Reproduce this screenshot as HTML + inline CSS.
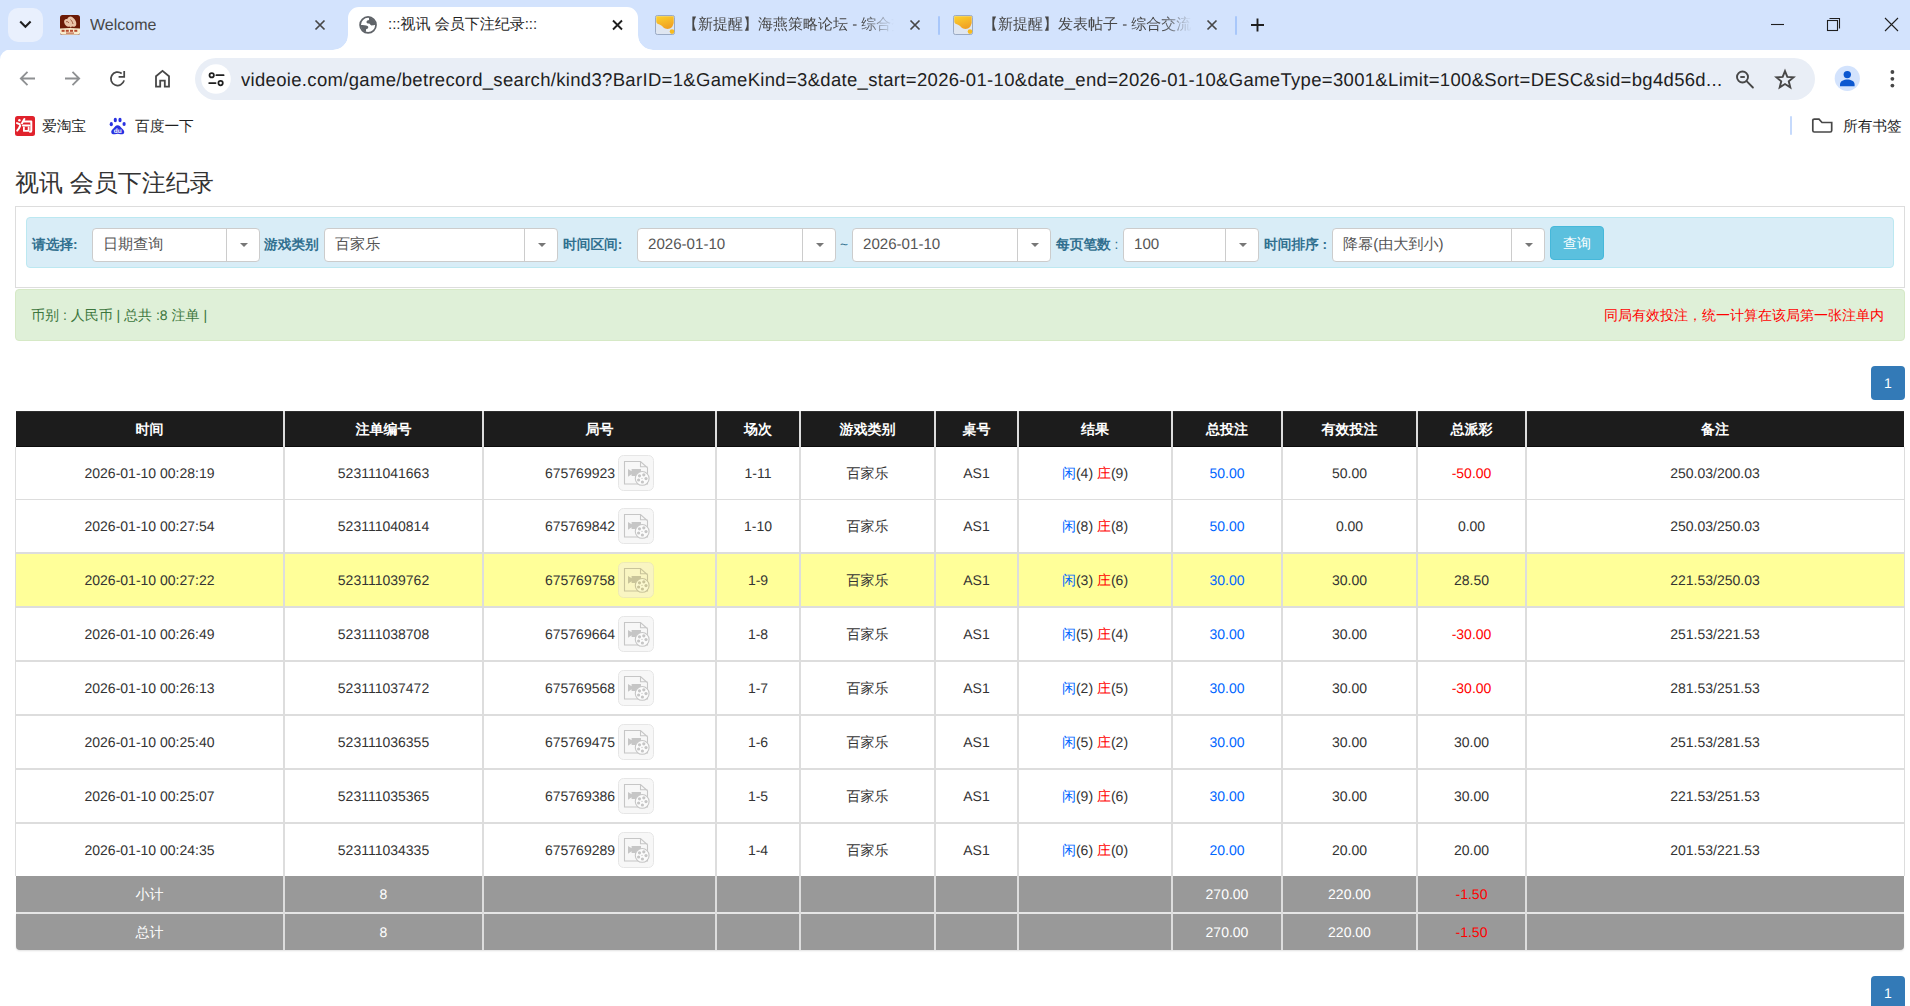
<!DOCTYPE html>
<html><head><meta charset="utf-8"><title>:::视讯 会员下注纪录:::</title>
<style>
*{box-sizing:border-box;margin:0;padding:0}
html,body{text-rendering:geometricPrecision;width:1910px;height:1006px;overflow:hidden;background:#fff;font-family:"Liberation Sans",sans-serif;color:#333}
#pg div,#ch div,#pg span{position:absolute}
#pg span.bl,#pg span.rd,#pg span.jn,#pg span.cj{position:static}
.cj{display:inline-block;white-space:nowrap;text-indent:0;text-align:justify;text-align-last:justify}
.th{background:#1c1c1c;border-top:1px solid #2e2e2e;border-bottom:1px solid #0c0c0c}
.tht{height:36px;line-height:36px;text-align:center;color:#fff;font-weight:bold;font-size:14px}
.td,.tdw{height:20px;line-height:20px;text-align:center;font-size:14px;color:#333;white-space:nowrap}
.tdw{color:#fff}
.bl{color:#0066ff}
.rd{color:#ff0000}
.hl{background:#dddddd}
.hlw{background:#e6e6e6}
.vl{background:#dddddd}
.gr{background:#999999}
#pg .jc{display:flex;align-items:center;justify-content:center;height:36px}
#pg .vid{position:static;display:block;width:36px;height:36px;margin-left:3px}
.lbl{font-size:13.7px;font-weight:bold;color:#31708f;line-height:20px;height:20px;white-space:nowrap}
.sel{height:34px;background:#fff;border:1px solid #ccc;border-radius:4px}
.sel .st{left:10px;top:6px;font-size:15.1px;line-height:20px;color:#555;white-space:nowrap}
.sel .dv{top:0;width:1px;height:32px;background:#ccc}
.sel .ar{top:14px;width:0;height:0;border-left:4px solid transparent;border-right:4px solid transparent;border-top:4px solid #777}
.ctab{height:20px;line-height:20px;font-size:15px;white-space:nowrap;overflow:hidden}
.fade{-webkit-mask-image:linear-gradient(to right,#000 calc(100% - 30px),transparent 100%)}
.url{height:25px;line-height:26px;font-size:18.5px;letter-spacing:0.32px;color:#1f1f1f;white-space:nowrap;overflow:hidden}
.bmt{height:20px;line-height:20px;font-size:14.7px;color:#1f1f1f;white-space:nowrap}
</style></head>
<body>
<div id="ch">
<div style="left:0;top:0;width:1910px;height:50px;background:#d3e3fd"></div>
<div style="left:8px;top:8px;width:35px;height:34px;border-radius:10px;background:#e9f0fd"></div>
<svg style="position:absolute;left:0;top:0" width="1910" height="143" viewBox="0 0 1910 143">
 <!-- dropdown chevron -->
 <path d="M20.2 21.6 L25.4 26.8 L30.6 21.6" fill="none" stroke="#1f1f1f" stroke-width="2.1"/>
 <!-- active tab -->
 <path d="M333 50 A15 15 0 0 0 348 35 L348 18 A11 11 0 0 1 359 7 L627 7 A11 11 0 0 1 638 18 L638 35 A15 15 0 0 0 653 50 Z" fill="#fff"/>
 <!-- welcome favicon -->
 <rect x="60" y="15" width="20" height="20" rx="2.5" fill="#6b1a06"/>
 <path d="M60 28.6 Q70 27.6 80 28.6 L80 32.2 A2.5 2.5 0 0 1 77.5 34.7 L62.5 34.7 A2.5 2.5 0 0 1 60 32.2 Z" fill="#f8eccd"/>
 <path d="M64.2 22.5 C63.6 20 65.5 18.6 67.2 19.2 C68 17 70.5 15.6 72.5 17.3 C75.5 19.5 76.8 22.5 76.2 25 C75.5 27 73.5 27.2 72 26.2 L70.8 27.8 L69.8 26.5 C67.5 27.2 64.8 25.8 64.2 22.5 Z" fill="#e9c3a8"/>
 <path d="M66 22 C67 21 68.2 21.8 68.8 23 M70.5 19.5 C71.5 20.5 72.5 22 73 24" fill="none" stroke="#8a3a20" stroke-width="0.8"/>
 <g fill="#b5492d"><rect x="61.6" y="29.8" width="3" height="2"/><rect x="65.8" y="29.8" width="3" height="2"/><rect x="70" y="29.8" width="3" height="2"/><rect x="74.3" y="29.8" width="3" height="2"/><rect x="66" y="32.6" width="8" height="1"/></g>
 <!-- close X tab1 -->
 <path d="M315.5 20.5 L324.5 29.5 M324.5 20.5 L315.5 29.5" stroke="#474747" stroke-width="1.7"/>
 <!-- globe -->
 <g transform="translate(356,13)">
 <circle cx="12.05" cy="11.93" r="7.95" fill="none" stroke="#5f6368" stroke-width="1.75"/>
 <path d="M12.9 4.4 L13.1 6.9 C12 7 10.4 7.6 10.5 9 C10.5 10.3 11.5 10.5 13 10.6 C14 10.8 14.3 12.3 15.6 12.4 C17 12.5 18.2 11.8 19.4 11.7 A7.4 7.4 0 0 0 12.9 4.4 Z" fill="#5f6368"/>
 <path d="M4.7 12.1 C7 12.3 10 12.2 11.5 12.9 C12.6 13.5 12.5 15.2 11.3 15.7 C10.2 16 9.9 16.5 10 17.2 L10 19.1 A7.4 7.4 0 0 1 4.7 12.1 Z" fill="#5f6368"/>
 </g>
 <!-- close X tab2 -->
 <path d="M613 20.5 L622 29.5 M622 20.5 L613 29.5" stroke="#1f1f1f" stroke-width="1.9"/>
 <!-- tab3 favicon -->
 <defs><linearGradient id="yg" x1="0" y1="0" x2="0.4" y2="1"><stop offset="0" stop-color="#fdd22c"/><stop offset="1" stop-color="#f0a224"/></linearGradient></defs>
 <g id="fav3">
 <rect x="655.5" y="15.5" width="19" height="19" rx="1.8" fill="#dfe6f1" stroke="#9aaac4" stroke-width="1"/>
 <path d="M656.3 16.3 H673.7 V23 C673 25 672.5 27.5 670 28.5 C668 29.3 665 29.2 663.2 27.3 C661.5 25.5 661 25.2 659.5 24.6 C657.5 24 656.3 23 656.3 21.5 Z" fill="url(#yg)"/>
 <circle cx="672" cy="31.6" r="2.3" fill="#f8bb1e"/>
 </g>
 <path d="M910.5 20.5 L919.5 29.5 M919.5 20.5 L910.5 29.5" stroke="#474747" stroke-width="1.7"/>
 <rect x="938" y="16" width="2" height="19" rx="1" fill="#a8c7fa"/>
 <!-- tab4 favicon -->
 <use href="#fav3" transform="translate(298,0)"/>
 <path d="M1207.5 20.5 L1216.5 29.5 M1216.5 20.5 L1207.5 29.5" stroke="#474747" stroke-width="1.7"/>
 <rect x="1235" y="16" width="2" height="19" rx="1" fill="#a8c7fa"/>
 <!-- plus -->
 <path d="M1257.5 18.5 L1257.5 31.5 M1251 25 L1264 25" stroke="#1f1f1f" stroke-width="1.9"/>
 <!-- window controls -->
 <path d="M1771 24.5 L1784 24.5" stroke="#1f1f1f" stroke-width="1.1"/>
 <rect x="1827.5" y="20.5" width="10" height="10" fill="none" stroke="#1f1f1f" stroke-width="1.1"/>
 <path d="M1829.5 18.5 L1839.5 18.5 L1839.5 28.5" fill="none" stroke="#1f1f1f" stroke-width="1.1"/>
 <path d="M1885 18 L1898 31 M1898 18 L1885 31" stroke="#1f1f1f" stroke-width="1.1"/>
 <!-- toolbar -->
 <rect x="0" y="50" width="1910" height="93" fill="#fff"/>
 <path d="M333 50 A15 15 0 0 0 348 35 L348 50 Z M653 50 A15 15 0 0 1 638 35 L638 50 Z" fill="#fff"/>
 <path d="M0 49.5 L10 49.5 A10 10 0 0 0 0 59.5 Z" fill="#d3e3fd"/>
 <!-- back -->
 <path d="M35 78.5 L20.8 78.5 M27.5 71.8 L20.8 78.5 L27.5 85.2" fill="none" stroke="#8e9092" stroke-width="1.8"/>
 <path d="M65 78.5 L79.2 78.5 M72.5 71.8 L79.2 78.5 L72.5 85.2" fill="none" stroke="#8e9092" stroke-width="1.8"/>
 <!-- reload -->
 <path d="M124.1 80.4 A6.7 6.7 0 1 1 121.7 73.5" fill="none" stroke="#474747" stroke-width="1.75"/>
 <path d="M124.2 70.9 L124.2 76.9 L118.6 76.9" fill="none" stroke="#474747" stroke-width="1.75"/>
 <!-- home -->
 <path d="M156 86.6 L156 76.2 L162.5 70.9 L169 76.2 L169 86.6 L164.8 86.6 L164.8 80.6 L160.2 80.6 L160.2 86.6 Z" fill="none" stroke="#474747" stroke-width="1.8" stroke-linejoin="miter"/>
 <!-- omnibox -->
 <rect x="195" y="58" width="1620" height="42" rx="21" fill="#e9eef6"/>
 <circle cx="216" cy="79" r="14.8" fill="#fff"/>
 <circle cx="211.7" cy="75.2" r="2.2" fill="none" stroke="#1f1f1f" stroke-width="1.75"/>
 <path d="M216.4 75.2 L223.6 75.2" stroke="#1f1f1f" stroke-width="1.8" stroke-linecap="round"/>
 <circle cx="220.6" cy="83.1" r="2.2" fill="none" stroke="#1f1f1f" stroke-width="1.75"/>
 <path d="M209.2 83.1 L215.6 83.1" stroke="#1f1f1f" stroke-width="1.8" stroke-linecap="round"/>
 <!-- zoom -->
 <circle cx="1742.5" cy="77" r="5.5" fill="none" stroke="#474747" stroke-width="1.9"/>
 <path d="M1740.3 77 L1744.8 77" stroke="#474747" stroke-width="1.9"/>
 <path d="M1746.6 81.2 L1752.9 87.5" stroke="#474747" stroke-width="1.9" stroke-linecap="round"/>
 <!-- star -->
 <path d="M1785.00 71.10 L1787.32 76.90 L1793.56 77.32 L1788.76 81.32 L1790.29 87.38 L1785.00 84.05 L1779.71 87.38 L1781.24 81.32 L1776.44 77.32 L1782.68 76.90 Z" fill="none" stroke="#474747" stroke-width="1.9" stroke-linejoin="miter" stroke-miterlimit="10"/>
 <!-- profile -->
 <circle cx="1847.3" cy="78.4" r="12.6" fill="#d3e3fd"/>
 <circle cx="1847.3" cy="74.6" r="3.7" fill="#0b57d0"/>
 <path d="M1840 86.2 L1840 84.5 C1840 81 1844 79.6 1847.3 79.6 C1850.6 79.6 1854.6 81 1854.6 84.5 L1854.6 86.2 Z" fill="#0b57d0"/>
 <!-- menu -->
 <circle cx="1892.4" cy="72" r="1.9" fill="#474747"/>
 <circle cx="1892.4" cy="78.8" r="1.9" fill="#474747"/>
 <circle cx="1892.4" cy="85.6" r="1.9" fill="#474747"/>
 <!-- bookmarks -->
 <rect x="15" y="116" width="20" height="20" rx="2.5" fill="#e0222c"/>
 <g fill="none" stroke="#fff" stroke-width="2" stroke-linecap="round" stroke-linejoin="round">
  <path d="M17 123.1 L19.8 124.2 M17.2 130.6 Q19.3 128.4 20.2 125.6 M24.4 119 L22 123.3 M23.6 121.4 L31.3 121.4 L31.3 130.8 Q31.2 131.8 30 131.8 M23 125.4 L29.2 125.4"/>
  <path d="M23.9 127.4 L23.9 130.9 L28.6 130.9 L28.6 127.4" stroke-width="1.8"/>
 </g>
 <circle cx="19.4" cy="120.3" r="1.2" fill="#fff"/>
 <path d="M25.3 127.9 C25.3 127.2 26.2 127.1 26.3 127.8 C26.4 127.1 27.3 127.2 27.3 127.9 C27.3 128.6 26.3 129.4 26.3 129.4 C26.3 129.4 25.3 128.6 25.3 127.9 Z" fill="#e0222c"/>
 <g fill="#2932e1">
 <ellipse cx="111.3" cy="124.2" rx="1.6" ry="2.1"/><ellipse cx="115.3" cy="120" rx="1.6" ry="2.2"/><ellipse cx="120" cy="120" rx="1.6" ry="2.2"/><ellipse cx="124.1" cy="124" rx="1.6" ry="2.1"/>
 <path d="M117.6 125.2 C115.5 125.2 114.8 126.8 113.6 128.2 C112.2 129.6 110.9 130.6 111.3 132.4 C111.7 134.2 113.5 134.5 114.8 134.2 C116 134 116.8 133.7 117.7 133.7 C118.7 133.7 119.4 134 120.6 134.2 C122 134.5 123.8 134.2 124.2 132.4 C124.5 130.6 123.2 129.6 121.8 128.2 C120.5 126.8 119.8 125.2 117.6 125.2 Z"/>
 </g>
 <text x="117.7" y="133" font-family="Liberation Sans" font-size="6.5" font-weight="bold" fill="#fff" text-anchor="middle">du</text>
 <path d="M1812.8 119.5 L1812.8 130.5 A1.5 1.5 0 0 0 1814.3 132 L1830.2 132 A1.5 1.5 0 0 0 1831.7 130.5 L1831.7 122.5 L1822 122.5 L1819 119.2 L1814.3 119.2 A1.5 1.5 0 0 0 1812.8 120.7" fill="none" stroke="#474747" stroke-width="1.7"/>
 <rect x="1790" y="116" width="2" height="19" rx="1" fill="#c6dafc"/>
</svg>
<div class="ctab" style="left:90px;top:16px;color:#474747;font-size:16px">Welcome</div>
<div class="ctab" style="left:388px;top:15px;color:#1f1f1f">:::<span class="cj" style="width:30px">视讯</span> <span class="cj" style="width:90px">会员下注纪录</span>:::</div>
<div class="ctab fade" style="left:683px;top:15px;width:211px;color:#474747"><span class="cj" style="width:165px">【新提醒】海燕策略论坛</span> - <span class="cj" style="width:60px">综合交流</span></div>
<div class="ctab fade" style="left:983px;top:15px;width:209px;color:#474747"><span class="cj" style="width:135px">【新提醒】发表帖子</span> - <span class="cj" style="width:60px">综合交流</span></div>
<div class="url" style="left:241px;top:67px;width:1485px">videoie.com/game/betrecord_search/kind3?BarID=1&amp;GameKind=3&amp;date_start=2026-01-10&amp;date_end=2026-01-10&amp;GameType=3001&amp;Limit=100&amp;Sort=DESC&amp;sid=bg4d56d...</div>
<div class="bmt" style="left:42px;top:117px"><span class="cj" style="width:44.06px">爱淘宝</span></div>
<div class="bmt" style="left:135px;top:117px"><span class="cj" style="width:58.75px">百度一下</span></div>
<div class="bmt" style="left:1843px;top:117px"><span class="cj" style="width:58.75px">所有书签</span></div>
</div>

<div id="pg">
<div style="left:15px;top:170px;font-size:24px;line-height:28px;color:#333;white-space:nowrap"><span class="cj" style="width:48px">视讯</span> <span class="cj" style="width:144px">会员下注纪录</span></div>
<div style="left:15px;top:206px;width:1890px;height:82px;border:1px solid #ddd;background:#fff"></div>
<div style="left:26px;top:217px;width:1868px;height:51px;border:1px solid #bce8f1;border-radius:4px;background:#d9edf7"></div>
<div class="lbl" style="left:32px;top:235px"><span class="cj" style="width:41.06px">请选择</span>:</div>
<div class="sel" style="left:92px;top:228px;width:168px"><div class="st"><span class="cj" style="width:60.38px">日期查询</span></div><div class="dv" style="left:133px"></div><div class="ar" style="left:147px"></div></div>
<div class="lbl" style="left:264px;top:235px"><span class="cj" style="width:54.75px">游戏类别</span></div>
<div class="sel" style="left:324px;top:228px;width:234px"><div class="st"><span class="cj" style="width:45.28px">百家乐</span></div><div class="dv" style="left:199px"></div><div class="ar" style="left:213px"></div></div>
<div class="lbl" style="left:563px;top:235px"><span class="cj" style="width:54.75px">时间区间</span>:</div>
<div class="sel" style="left:637px;top:228px;width:199px"><div class="st">2026-01-10</div><div class="dv" style="left:164px"></div><div class="ar" style="left:178px"></div></div>
<div class="lbl" style="left:840px;top:235px;font-weight:normal">~</div>
<div class="sel" style="left:852px;top:228px;width:199px"><div class="st">2026-01-10</div><div class="dv" style="left:164px"></div><div class="ar" style="left:178px"></div></div>
<div class="lbl" style="left:1056px;top:235px"><span class="cj" style="width:54.75px">每页笔数</span><span style="position:static;font-weight:normal"> :</span></div>
<div class="sel" style="left:1123px;top:228px;width:136px"><div class="st">100</div><div class="dv" style="left:101px"></div><div class="ar" style="left:115px"></div></div>
<div class="lbl" style="left:1264px;top:235px"><span class="cj" style="width:54.75px">时间排序</span> :</div>
<div class="sel" style="left:1332px;top:228px;width:213px"><div class="st"><span class="cj" style="width:30.19px">降幂</span>(<span class="cj" style="width:60.38px">由大到小</span>)</div><div class="dv" style="left:178px"></div><div class="ar" style="left:192px"></div></div>
<div style="left:1550px;top:226px;width:54px;height:34px;background:#5bc0de;border:1px solid #46b8da;border-radius:4px;color:#fff;font-size:14px;line-height:33px;text-align:center"><span class="cj" style="width:28px">查询</span></div>
<div style="left:15px;top:289px;width:1890px;height:52px;border:1px solid #d6e9c6;border-radius:4px;background:#dff0d8"></div>
<div style="left:31px;top:305px;font-size:14px;line-height:20px;color:#3c763d;white-space:nowrap"><span class="cj" style="width:28px">币别</span> : <span class="cj" style="width:42px">人民币</span> | <span class="cj" style="width:28px">总共</span> :8 <span class="cj" style="width:28px">注单</span> |</div>
<div style="left:1604px;top:305px;font-size:14px;line-height:20px;color:#ff0000;white-space:nowrap"><span class="cj" style="width:280px">同局有效投注，统一计算在该局第一张注单内</span></div>
<div style="left:1871px;top:366px;width:34px;height:34px;background:#337ab7;border-radius:4px;color:#fff;font-size:14px;line-height:34px;text-align:center">1</div>
<div style="left:1871px;top:976px;width:34px;height:34px;background:#337ab7;border-radius:4px;color:#fff;font-size:14px;line-height:34px;text-align:center">1</div>
<div id="tbl">
<div class="th" style="left:16px;top:411px;width:1888px;height:36px"></div>
<div class="tht" style="left:15px;top:411px;width:269px"><span class="cj" style="width:28px">时间</span></div>
<div class="tht" style="left:284px;top:411px;width:199px"><span class="cj" style="width:56px">注单编号</span></div>
<div class="tht" style="left:483px;top:411px;width:233px"><span class="cj" style="width:28px">局号</span></div>
<div class="tht" style="left:716px;top:411px;width:84px"><span class="cj" style="width:28px">场次</span></div>
<div class="tht" style="left:800px;top:411px;width:135px"><span class="cj" style="width:56px">游戏类别</span></div>
<div class="tht" style="left:935px;top:411px;width:83px"><span class="cj" style="width:28px">桌号</span></div>
<div class="tht" style="left:1018px;top:411px;width:154px"><span class="cj" style="width:28px">结果</span></div>
<div class="tht" style="left:1172px;top:411px;width:110px"><span class="cj" style="width:42px">总投注</span></div>
<div class="tht" style="left:1282px;top:411px;width:135px"><span class="cj" style="width:56px">有效投注</span></div>
<div class="tht" style="left:1417px;top:411px;width:109px"><span class="cj" style="width:42px">总派彩</span></div>
<div class="tht" style="left:1526px;top:411px;width:378px"><span class="cj" style="width:28px">备注</span></div>
<div class="tr" style="left:15px;top:447px;width:1890px;height:53px;background:#fff"></div>
<div class="td" style="left:15px;top:463px;width:269px">2026-01-10 00:28:19</div>
<div class="td" style="left:284px;top:463px;width:199px">523111041663</div>
<div class="td jc" style="left:483px;top:455px;width:233px"><span class="jn">675769923</span><svg class="vid" width="36" height="36" viewBox="0 0 36 36"><rect x="0.5" y="0.5" width="35" height="35" rx="5" fill="#f7f7f7" stroke="#e6e6e6"/>
<path d="M6.5 6.5 L22.5 6.5 L29.5 12.8 L29.5 29 L6.5 29 Z M22.5 6.5 L22.5 11.8 L29.5 11.8" fill="none" stroke="#c6c6c6" stroke-width="1.1"/>
<path d="M10 13.9 L13.6 16.2 L13.6 14 L23 14 L23 21 L13.6 21 L13.6 19.3 L10 21.8 Z" fill="#c6c6c6"/>
<circle cx="24.2" cy="23.4" r="6.9" fill="#fbfbfb" stroke="#c6c6c6" stroke-width="1.1"/>
<circle cx="21.5" cy="20.8" r="1.6" fill="#c6c6c6"/><circle cx="25.8" cy="19.8" r="1.6" fill="#c6c6c6"/><circle cx="28" cy="23.6" r="1.6" fill="#c6c6c6"/><circle cx="24.4" cy="27" r="1.6" fill="#c6c6c6"/><circle cx="20.6" cy="25" r="1.6" fill="#c6c6c6"/><circle cx="24" cy="23.4" r="0.6" fill="#c6c6c6"/>
</svg></div>
<div class="td" style="left:716px;top:463px;width:84px">1-11</div>
<div class="td" style="left:800px;top:463px;width:135px"><span class="cj" style="width:42px">百家乐</span></div>
<div class="td" style="left:935px;top:463px;width:83px">AS1</div>
<div class="td" style="left:1018px;top:463px;width:154px"><span class="bl"><span class="cj" style="width:14px">闲</span></span>(4) <span class="rd"><span class="cj" style="width:14px">庄</span></span>(9)</div>
<div class="td" style="left:1172px;top:463px;width:110px"><span class="bl">50.00</span></div>
<div class="td" style="left:1282px;top:463px;width:135px">50.00</div>
<div class="td" style="left:1417px;top:463px;width:109px"><span class="rd">-50.00</span></div>
<div class="td" style="left:1526px;top:463px;width:378px">250.03/200.03</div>
<div class="tr" style="left:15px;top:500px;width:1890px;height:53px;background:#fff"></div>
<div class="td" style="left:15px;top:516px;width:269px">2026-01-10 00:27:54</div>
<div class="td" style="left:284px;top:516px;width:199px">523111040814</div>
<div class="td jc" style="left:483px;top:508px;width:233px"><span class="jn">675769842</span><svg class="vid" width="36" height="36" viewBox="0 0 36 36"><rect x="0.5" y="0.5" width="35" height="35" rx="5" fill="#f7f7f7" stroke="#e6e6e6"/>
<path d="M6.5 6.5 L22.5 6.5 L29.5 12.8 L29.5 29 L6.5 29 Z M22.5 6.5 L22.5 11.8 L29.5 11.8" fill="none" stroke="#c6c6c6" stroke-width="1.1"/>
<path d="M10 13.9 L13.6 16.2 L13.6 14 L23 14 L23 21 L13.6 21 L13.6 19.3 L10 21.8 Z" fill="#c6c6c6"/>
<circle cx="24.2" cy="23.4" r="6.9" fill="#fbfbfb" stroke="#c6c6c6" stroke-width="1.1"/>
<circle cx="21.5" cy="20.8" r="1.6" fill="#c6c6c6"/><circle cx="25.8" cy="19.8" r="1.6" fill="#c6c6c6"/><circle cx="28" cy="23.6" r="1.6" fill="#c6c6c6"/><circle cx="24.4" cy="27" r="1.6" fill="#c6c6c6"/><circle cx="20.6" cy="25" r="1.6" fill="#c6c6c6"/><circle cx="24" cy="23.4" r="0.6" fill="#c6c6c6"/>
</svg></div>
<div class="td" style="left:716px;top:516px;width:84px">1-10</div>
<div class="td" style="left:800px;top:516px;width:135px"><span class="cj" style="width:42px">百家乐</span></div>
<div class="td" style="left:935px;top:516px;width:83px">AS1</div>
<div class="td" style="left:1018px;top:516px;width:154px"><span class="bl"><span class="cj" style="width:14px">闲</span></span>(8) <span class="rd"><span class="cj" style="width:14px">庄</span></span>(8)</div>
<div class="td" style="left:1172px;top:516px;width:110px"><span class="bl">50.00</span></div>
<div class="td" style="left:1282px;top:516px;width:135px">0.00</div>
<div class="td" style="left:1417px;top:516px;width:109px">0.00</div>
<div class="td" style="left:1526px;top:516px;width:378px">250.03/250.03</div>
<div class="tr" style="left:15px;top:553px;width:1890px;height:54px;background:#ffff99"></div>
<div class="td" style="left:15px;top:570px;width:269px">2026-01-10 00:27:22</div>
<div class="td" style="left:284px;top:570px;width:199px">523111039762</div>
<div class="td jc" style="left:483px;top:562px;width:233px"><span class="jn">675769758</span><svg class="vid" width="36" height="36" viewBox="0 0 36 36"><rect x="0.5" y="0.5" width="35" height="35" rx="5" fill="#f9f5c2" stroke="#eeeab5"/>
<path d="M6.5 6.5 L22.5 6.5 L29.5 12.8 L29.5 29 L6.5 29 Z M22.5 6.5 L22.5 11.8 L29.5 11.8" fill="none" stroke="#c9c49a" stroke-width="1.1"/>
<path d="M10 13.9 L13.6 16.2 L13.6 14 L23 14 L23 21 L13.6 21 L13.6 19.3 L10 21.8 Z" fill="#c9c49a"/>
<circle cx="24.2" cy="23.4" r="6.9" fill="#fbf8cf" stroke="#c9c49a" stroke-width="1.1"/>
<circle cx="21.5" cy="20.8" r="1.6" fill="#c9c49a"/><circle cx="25.8" cy="19.8" r="1.6" fill="#c9c49a"/><circle cx="28" cy="23.6" r="1.6" fill="#c9c49a"/><circle cx="24.4" cy="27" r="1.6" fill="#c9c49a"/><circle cx="20.6" cy="25" r="1.6" fill="#c9c49a"/><circle cx="24" cy="23.4" r="0.6" fill="#c9c49a"/>
</svg></div>
<div class="td" style="left:716px;top:570px;width:84px">1-9</div>
<div class="td" style="left:800px;top:570px;width:135px"><span class="cj" style="width:42px">百家乐</span></div>
<div class="td" style="left:935px;top:570px;width:83px">AS1</div>
<div class="td" style="left:1018px;top:570px;width:154px"><span class="bl"><span class="cj" style="width:14px">闲</span></span>(3) <span class="rd"><span class="cj" style="width:14px">庄</span></span>(6)</div>
<div class="td" style="left:1172px;top:570px;width:110px"><span class="bl">30.00</span></div>
<div class="td" style="left:1282px;top:570px;width:135px">30.00</div>
<div class="td" style="left:1417px;top:570px;width:109px">28.50</div>
<div class="td" style="left:1526px;top:570px;width:378px">221.53/250.03</div>
<div class="tr" style="left:15px;top:607px;width:1890px;height:54px;background:#fff"></div>
<div class="td" style="left:15px;top:624px;width:269px">2026-01-10 00:26:49</div>
<div class="td" style="left:284px;top:624px;width:199px">523111038708</div>
<div class="td jc" style="left:483px;top:616px;width:233px"><span class="jn">675769664</span><svg class="vid" width="36" height="36" viewBox="0 0 36 36"><rect x="0.5" y="0.5" width="35" height="35" rx="5" fill="#f7f7f7" stroke="#e6e6e6"/>
<path d="M6.5 6.5 L22.5 6.5 L29.5 12.8 L29.5 29 L6.5 29 Z M22.5 6.5 L22.5 11.8 L29.5 11.8" fill="none" stroke="#c6c6c6" stroke-width="1.1"/>
<path d="M10 13.9 L13.6 16.2 L13.6 14 L23 14 L23 21 L13.6 21 L13.6 19.3 L10 21.8 Z" fill="#c6c6c6"/>
<circle cx="24.2" cy="23.4" r="6.9" fill="#fbfbfb" stroke="#c6c6c6" stroke-width="1.1"/>
<circle cx="21.5" cy="20.8" r="1.6" fill="#c6c6c6"/><circle cx="25.8" cy="19.8" r="1.6" fill="#c6c6c6"/><circle cx="28" cy="23.6" r="1.6" fill="#c6c6c6"/><circle cx="24.4" cy="27" r="1.6" fill="#c6c6c6"/><circle cx="20.6" cy="25" r="1.6" fill="#c6c6c6"/><circle cx="24" cy="23.4" r="0.6" fill="#c6c6c6"/>
</svg></div>
<div class="td" style="left:716px;top:624px;width:84px">1-8</div>
<div class="td" style="left:800px;top:624px;width:135px"><span class="cj" style="width:42px">百家乐</span></div>
<div class="td" style="left:935px;top:624px;width:83px">AS1</div>
<div class="td" style="left:1018px;top:624px;width:154px"><span class="bl"><span class="cj" style="width:14px">闲</span></span>(5) <span class="rd"><span class="cj" style="width:14px">庄</span></span>(4)</div>
<div class="td" style="left:1172px;top:624px;width:110px"><span class="bl">30.00</span></div>
<div class="td" style="left:1282px;top:624px;width:135px">30.00</div>
<div class="td" style="left:1417px;top:624px;width:109px"><span class="rd">-30.00</span></div>
<div class="td" style="left:1526px;top:624px;width:378px">251.53/221.53</div>
<div class="tr" style="left:15px;top:661px;width:1890px;height:54px;background:#fff"></div>
<div class="td" style="left:15px;top:678px;width:269px">2026-01-10 00:26:13</div>
<div class="td" style="left:284px;top:678px;width:199px">523111037472</div>
<div class="td jc" style="left:483px;top:670px;width:233px"><span class="jn">675769568</span><svg class="vid" width="36" height="36" viewBox="0 0 36 36"><rect x="0.5" y="0.5" width="35" height="35" rx="5" fill="#f7f7f7" stroke="#e6e6e6"/>
<path d="M6.5 6.5 L22.5 6.5 L29.5 12.8 L29.5 29 L6.5 29 Z M22.5 6.5 L22.5 11.8 L29.5 11.8" fill="none" stroke="#c6c6c6" stroke-width="1.1"/>
<path d="M10 13.9 L13.6 16.2 L13.6 14 L23 14 L23 21 L13.6 21 L13.6 19.3 L10 21.8 Z" fill="#c6c6c6"/>
<circle cx="24.2" cy="23.4" r="6.9" fill="#fbfbfb" stroke="#c6c6c6" stroke-width="1.1"/>
<circle cx="21.5" cy="20.8" r="1.6" fill="#c6c6c6"/><circle cx="25.8" cy="19.8" r="1.6" fill="#c6c6c6"/><circle cx="28" cy="23.6" r="1.6" fill="#c6c6c6"/><circle cx="24.4" cy="27" r="1.6" fill="#c6c6c6"/><circle cx="20.6" cy="25" r="1.6" fill="#c6c6c6"/><circle cx="24" cy="23.4" r="0.6" fill="#c6c6c6"/>
</svg></div>
<div class="td" style="left:716px;top:678px;width:84px">1-7</div>
<div class="td" style="left:800px;top:678px;width:135px"><span class="cj" style="width:42px">百家乐</span></div>
<div class="td" style="left:935px;top:678px;width:83px">AS1</div>
<div class="td" style="left:1018px;top:678px;width:154px"><span class="bl"><span class="cj" style="width:14px">闲</span></span>(2) <span class="rd"><span class="cj" style="width:14px">庄</span></span>(5)</div>
<div class="td" style="left:1172px;top:678px;width:110px"><span class="bl">30.00</span></div>
<div class="td" style="left:1282px;top:678px;width:135px">30.00</div>
<div class="td" style="left:1417px;top:678px;width:109px"><span class="rd">-30.00</span></div>
<div class="td" style="left:1526px;top:678px;width:378px">281.53/251.53</div>
<div class="tr" style="left:15px;top:715px;width:1890px;height:54px;background:#fff"></div>
<div class="td" style="left:15px;top:732px;width:269px">2026-01-10 00:25:40</div>
<div class="td" style="left:284px;top:732px;width:199px">523111036355</div>
<div class="td jc" style="left:483px;top:724px;width:233px"><span class="jn">675769475</span><svg class="vid" width="36" height="36" viewBox="0 0 36 36"><rect x="0.5" y="0.5" width="35" height="35" rx="5" fill="#f7f7f7" stroke="#e6e6e6"/>
<path d="M6.5 6.5 L22.5 6.5 L29.5 12.8 L29.5 29 L6.5 29 Z M22.5 6.5 L22.5 11.8 L29.5 11.8" fill="none" stroke="#c6c6c6" stroke-width="1.1"/>
<path d="M10 13.9 L13.6 16.2 L13.6 14 L23 14 L23 21 L13.6 21 L13.6 19.3 L10 21.8 Z" fill="#c6c6c6"/>
<circle cx="24.2" cy="23.4" r="6.9" fill="#fbfbfb" stroke="#c6c6c6" stroke-width="1.1"/>
<circle cx="21.5" cy="20.8" r="1.6" fill="#c6c6c6"/><circle cx="25.8" cy="19.8" r="1.6" fill="#c6c6c6"/><circle cx="28" cy="23.6" r="1.6" fill="#c6c6c6"/><circle cx="24.4" cy="27" r="1.6" fill="#c6c6c6"/><circle cx="20.6" cy="25" r="1.6" fill="#c6c6c6"/><circle cx="24" cy="23.4" r="0.6" fill="#c6c6c6"/>
</svg></div>
<div class="td" style="left:716px;top:732px;width:84px">1-6</div>
<div class="td" style="left:800px;top:732px;width:135px"><span class="cj" style="width:42px">百家乐</span></div>
<div class="td" style="left:935px;top:732px;width:83px">AS1</div>
<div class="td" style="left:1018px;top:732px;width:154px"><span class="bl"><span class="cj" style="width:14px">闲</span></span>(5) <span class="rd"><span class="cj" style="width:14px">庄</span></span>(2)</div>
<div class="td" style="left:1172px;top:732px;width:110px"><span class="bl">30.00</span></div>
<div class="td" style="left:1282px;top:732px;width:135px">30.00</div>
<div class="td" style="left:1417px;top:732px;width:109px">30.00</div>
<div class="td" style="left:1526px;top:732px;width:378px">251.53/281.53</div>
<div class="tr" style="left:15px;top:769px;width:1890px;height:54px;background:#fff"></div>
<div class="td" style="left:15px;top:786px;width:269px">2026-01-10 00:25:07</div>
<div class="td" style="left:284px;top:786px;width:199px">523111035365</div>
<div class="td jc" style="left:483px;top:778px;width:233px"><span class="jn">675769386</span><svg class="vid" width="36" height="36" viewBox="0 0 36 36"><rect x="0.5" y="0.5" width="35" height="35" rx="5" fill="#f7f7f7" stroke="#e6e6e6"/>
<path d="M6.5 6.5 L22.5 6.5 L29.5 12.8 L29.5 29 L6.5 29 Z M22.5 6.5 L22.5 11.8 L29.5 11.8" fill="none" stroke="#c6c6c6" stroke-width="1.1"/>
<path d="M10 13.9 L13.6 16.2 L13.6 14 L23 14 L23 21 L13.6 21 L13.6 19.3 L10 21.8 Z" fill="#c6c6c6"/>
<circle cx="24.2" cy="23.4" r="6.9" fill="#fbfbfb" stroke="#c6c6c6" stroke-width="1.1"/>
<circle cx="21.5" cy="20.8" r="1.6" fill="#c6c6c6"/><circle cx="25.8" cy="19.8" r="1.6" fill="#c6c6c6"/><circle cx="28" cy="23.6" r="1.6" fill="#c6c6c6"/><circle cx="24.4" cy="27" r="1.6" fill="#c6c6c6"/><circle cx="20.6" cy="25" r="1.6" fill="#c6c6c6"/><circle cx="24" cy="23.4" r="0.6" fill="#c6c6c6"/>
</svg></div>
<div class="td" style="left:716px;top:786px;width:84px">1-5</div>
<div class="td" style="left:800px;top:786px;width:135px"><span class="cj" style="width:42px">百家乐</span></div>
<div class="td" style="left:935px;top:786px;width:83px">AS1</div>
<div class="td" style="left:1018px;top:786px;width:154px"><span class="bl"><span class="cj" style="width:14px">闲</span></span>(9) <span class="rd"><span class="cj" style="width:14px">庄</span></span>(6)</div>
<div class="td" style="left:1172px;top:786px;width:110px"><span class="bl">30.00</span></div>
<div class="td" style="left:1282px;top:786px;width:135px">30.00</div>
<div class="td" style="left:1417px;top:786px;width:109px">30.00</div>
<div class="td" style="left:1526px;top:786px;width:378px">221.53/251.53</div>
<div class="tr" style="left:15px;top:823px;width:1890px;height:54px;background:#fff"></div>
<div class="td" style="left:15px;top:840px;width:269px">2026-01-10 00:24:35</div>
<div class="td" style="left:284px;top:840px;width:199px">523111034335</div>
<div class="td jc" style="left:483px;top:832px;width:233px"><span class="jn">675769289</span><svg class="vid" width="36" height="36" viewBox="0 0 36 36"><rect x="0.5" y="0.5" width="35" height="35" rx="5" fill="#f7f7f7" stroke="#e6e6e6"/>
<path d="M6.5 6.5 L22.5 6.5 L29.5 12.8 L29.5 29 L6.5 29 Z M22.5 6.5 L22.5 11.8 L29.5 11.8" fill="none" stroke="#c6c6c6" stroke-width="1.1"/>
<path d="M10 13.9 L13.6 16.2 L13.6 14 L23 14 L23 21 L13.6 21 L13.6 19.3 L10 21.8 Z" fill="#c6c6c6"/>
<circle cx="24.2" cy="23.4" r="6.9" fill="#fbfbfb" stroke="#c6c6c6" stroke-width="1.1"/>
<circle cx="21.5" cy="20.8" r="1.6" fill="#c6c6c6"/><circle cx="25.8" cy="19.8" r="1.6" fill="#c6c6c6"/><circle cx="28" cy="23.6" r="1.6" fill="#c6c6c6"/><circle cx="24.4" cy="27" r="1.6" fill="#c6c6c6"/><circle cx="20.6" cy="25" r="1.6" fill="#c6c6c6"/><circle cx="24" cy="23.4" r="0.6" fill="#c6c6c6"/>
</svg></div>
<div class="td" style="left:716px;top:840px;width:84px">1-4</div>
<div class="td" style="left:800px;top:840px;width:135px"><span class="cj" style="width:42px">百家乐</span></div>
<div class="td" style="left:935px;top:840px;width:83px">AS1</div>
<div class="td" style="left:1018px;top:840px;width:154px"><span class="bl"><span class="cj" style="width:14px">闲</span></span>(6) <span class="rd"><span class="cj" style="width:14px">庄</span></span>(0)</div>
<div class="td" style="left:1172px;top:840px;width:110px"><span class="bl">20.00</span></div>
<div class="td" style="left:1282px;top:840px;width:135px">20.00</div>
<div class="td" style="left:1417px;top:840px;width:109px">20.00</div>
<div class="td" style="left:1526px;top:840px;width:378px">201.53/221.53</div>
<div class="hl" style="left:15px;top:499px;width:1890px;height:1px"></div>
<div class="hl" style="left:15px;top:552px;width:1890px;height:2px"></div>
<div class="hl" style="left:15px;top:606px;width:1890px;height:2px"></div>
<div class="hl" style="left:15px;top:660px;width:1890px;height:2px"></div>
<div class="hl" style="left:15px;top:714px;width:1890px;height:2px"></div>
<div class="hl" style="left:15px;top:768px;width:1890px;height:2px"></div>
<div class="hl" style="left:15px;top:822px;width:1890px;height:2px"></div>
<div class="gr" style="left:16px;top:876px;width:1888px;height:36px;"></div>
<div class="tdw" style="left:15px;top:884px;width:269px"><span class="cj" style="width:28px">小计</span></div>
<div class="tdw" style="left:284px;top:884px;width:199px">8</div>
<div class="tdw" style="left:1172px;top:884px;width:110px">270.00</div>
<div class="tdw" style="left:1282px;top:884px;width:135px">220.00</div>
<div class="tdw" style="left:1417px;top:884px;width:109px"><span class="rd">-1.50</span></div>
<div class="gr" style="left:16px;top:914px;width:1888px;height:36px;border-radius:0 0 4px 4px;box-shadow:0 1px 2px rgba(0,0,0,.12);"></div>
<div class="tdw" style="left:15px;top:922px;width:269px"><span class="cj" style="width:28px">总计</span></div>
<div class="tdw" style="left:284px;top:922px;width:199px">8</div>
<div class="tdw" style="left:1172px;top:922px;width:110px">270.00</div>
<div class="tdw" style="left:1282px;top:922px;width:135px">220.00</div>
<div class="tdw" style="left:1417px;top:922px;width:109px"><span class="rd">-1.50</span></div>
<div class="hlw" style="left:16px;top:912px;width:1888px;height:2px"></div>
<div class="vl" style="left:283px;top:411px;width:2px;height:539px"></div>
<div class="vl" style="left:482px;top:411px;width:2px;height:539px"></div>
<div class="vl" style="left:715px;top:411px;width:2px;height:539px"></div>
<div class="vl" style="left:799px;top:411px;width:2px;height:539px"></div>
<div class="vl" style="left:934px;top:411px;width:2px;height:539px"></div>
<div class="vl" style="left:1017px;top:411px;width:2px;height:539px"></div>
<div class="vl" style="left:1171px;top:411px;width:2px;height:539px"></div>
<div class="vl" style="left:1281px;top:411px;width:2px;height:539px"></div>
<div class="vl" style="left:1416px;top:411px;width:2px;height:539px"></div>
<div class="vl" style="left:1525px;top:411px;width:2px;height:539px"></div>
<div class="vl" style="left:15px;top:447px;width:1px;height:429px"></div>
<div class="vl" style="left:1904px;top:447px;width:1px;height:429px"></div>
</div>
</div>
</body></html>
